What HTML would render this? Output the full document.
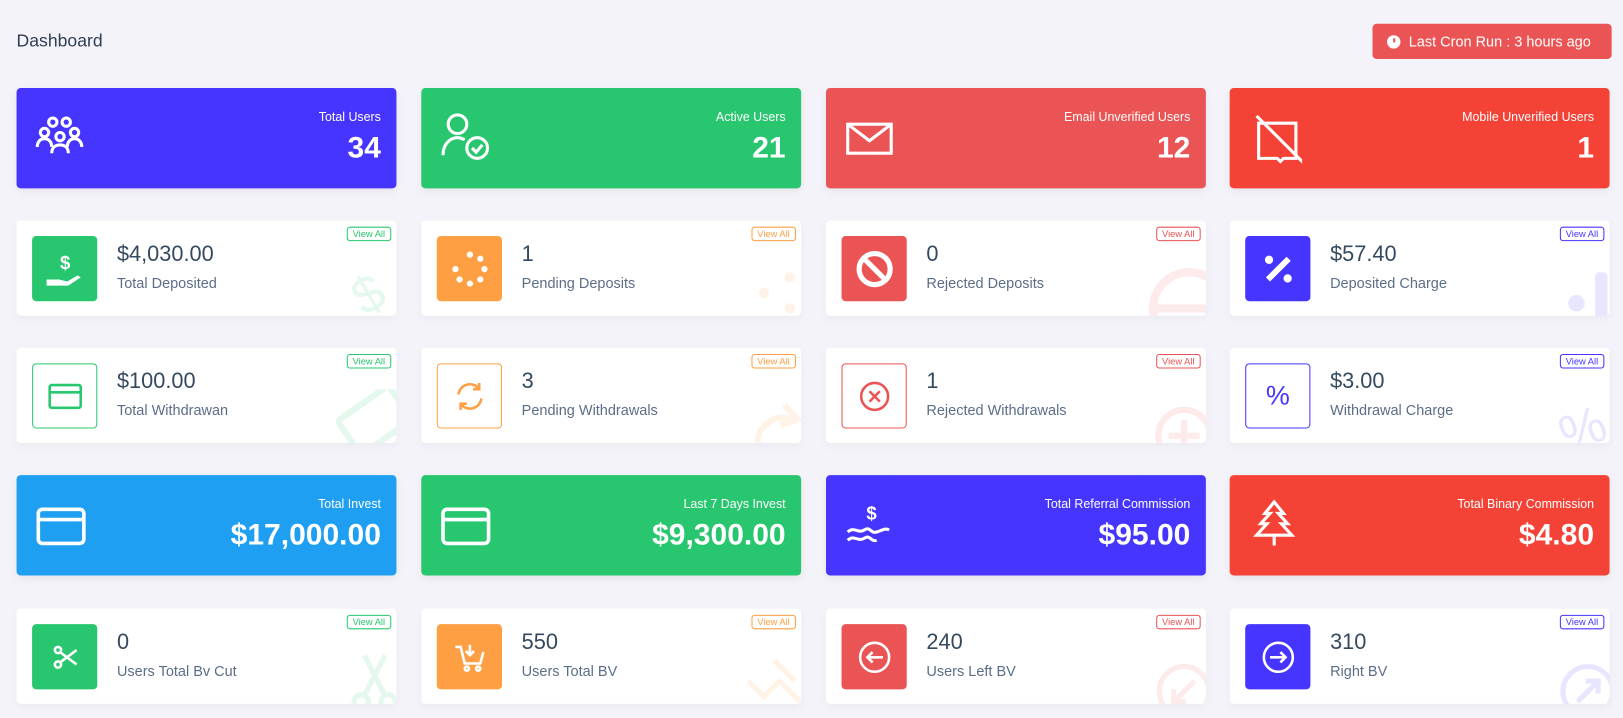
<!DOCTYPE html>
<html><head><meta charset="utf-8"><style>
*{box-sizing:border-box;margin:0;padding:0}
html,body{width:1623px;height:718px;background:#f3f3f9;overflow:hidden}
#w{position:absolute;left:0;top:0;width:1568px;height:694px;transform:scale(1.03508);transform-origin:0 0;font-family:"Liberation Sans",sans-serif;color:#34495e}
.title{position:absolute;left:16px;top:30px;font-size:17px;color:#2f3e53}
.cron{position:absolute;left:1326px;top:23px;width:231px;height:34px;background:#ea5455;border-radius:4px;color:#fff;font-size:14px;display:flex;align-items:center;padding-left:14px}
.cron .c{width:13px;height:13px;border-radius:50%;background:#fff;margin-right:8px;position:relative}
.cron .c:after{content:"";position:absolute;left:6px;top:3px;width:2px;height:4px;background:#ea5455}
.big{position:absolute;width:367px;height:97px;border-radius:4px;color:#fff;box-shadow:0 3px 8px rgba(0,0,0,.06)}
.big .lab{position:absolute;right:15px;top:21px;font-size:12px}
.big .val{position:absolute;right:15px;top:42px;font-size:29px;font-weight:bold}
.big svg{position:absolute;left:18px;top:23px}
.sm{position:absolute;width:367px;height:92px;background:#fff;border-radius:4px;overflow:hidden;box-shadow:0 3px 8px rgba(0,0,0,.04)}
.sm .ic{position:absolute;left:15px;top:15px;width:63px;height:63px;border-radius:4px;display:flex;align-items:center;justify-content:center}
.sm .v{position:absolute;left:97px;top:21px;font-size:21px;color:#34495e}
.sm .l{position:absolute;left:97px;top:52px;font-size:14px;color:#5b6e88}
.sm .va{position:absolute;right:5px;top:6px;font-size:9px;border:1px solid;border-radius:3px;padding:1px 5px}
.sm .bg{position:absolute;right:-4px;bottom:-8px;opacity:.12}
</style></head><body><div id="w">
<div class="title">Dashboard</div>
<div class="cron"><span class="c"></span>Last Cron Run : 3 hours ago</div>

<div class="big" style="left:16px;top:85px;background:#4634ff"><svg width="52" height="50" viewBox="0 0 52 50" fill="none" stroke="#fff" stroke-width="3"><circle cx="17" cy="10" r="4"/><circle cx="30" cy="10" r="4"/><circle cx="9" cy="20" r="4"/><circle cx="24" cy="24" r="4"/><circle cx="38" cy="20" r="4"/><path d="M2 34c0-5 3-8 7-8s7 3 7 8M16 40c0-5 3-8 8-8s8 3 8 8M31 34c0-5 3-8 7-8s7 3 7 8"/></svg><div class="lab">Total Users</div><div class="val">34</div></div>
<div class="big" style="left:407px;top:85px;background:#28c76f"><svg width="52" height="50" viewBox="0 0 52 50" fill="none" stroke="#fff" stroke-width="3"><circle cx="17" cy="12" r="9"/><path d="M3 42c0-10 6-17 14-17 3 0 5 1 7 2"/><circle cx="36" cy="35" r="10"/><path d="M31 35l4 4 6-7"/></svg><div class="lab">Active Users</div><div class="val">21</div></div>
<div class="big" style="left:798px;top:85px;background:#ea5455"><svg width="52" height="50" viewBox="0 0 52 50" fill="none" stroke="#fff" stroke-width="3"><rect x="3" y="12" width="42" height="28"/><path d="M3 12l21 16 21-16"/></svg><div class="lab">Email Unverified Users</div><div class="val">12</div></div>
<div class="big" style="left:1188px;top:85px;background:#f44336"><svg width="52" height="50" viewBox="0 0 52 50" fill="none" stroke="#fff" stroke-width="3"><path d="M10 11h36v34H34l-3 3-3-3H10z"/><path d="M8 4l46 46" /></svg><div class="lab">Mobile Unverified Users</div><div class="val">1</div></div>

<div class="sm" style="left:16px;top:213px"><div class="ic" style="background:#28c76f"><svg width="40" height="40" viewBox="0 0 40 40" fill="#fff"><text x="15" y="20" font-size="18" font-weight="bold" font-family="Liberation Sans">$</text><path d="M2 30h12l8 2 10-6 3 2-12 8H2z"/></svg></div><div class="v">$4,030.00</div><div class="l">Total Deposited</div><div class="va" style="color:#28c76f;border-color:#28c76f">View All</div><svg class="bg" width="50" height="60" viewBox="0 0 50 60"><text x="5" y="45" font-size="50" fill="#28c76f" transform="rotate(-30 25 30)">$</text></svg></div>
<div class="sm" style="left:407px;top:213px"><div class="ic" style="background:#ff9f43"><svg width="40" height="40" viewBox="0 0 40 40" fill="#fff"><circle cx="20" cy="6" r="3"/><circle cx="30" cy="10" r="3"/><circle cx="34" cy="20" r="3"/><circle cx="30" cy="30" r="3"/><circle cx="20" cy="34" r="3"/><circle cx="10" cy="30" r="3"/><circle cx="6" cy="20" r="3"/></svg></div><div class="v">1</div><div class="l">Pending Deposits</div><div class="va" style="color:#ff9f43;border-color:#ff9f43">View All</div><svg class="bg" width="60" height="60"><circle cx="45" cy="15" r="5" fill="#ff9f43"/><circle cx="20" cy="30" r="5" fill="#ff9f43"/><circle cx="45" cy="45" r="5" fill="#ff9f43"/></svg></div>
<div class="sm" style="left:798px;top:213px"><div class="ic" style="background:#ea5455"><svg width="40" height="40" viewBox="0 0 40 40" fill="none" stroke="#fff" stroke-width="5"><circle cx="20" cy="20" r="15"/><path d="M10 10l20 20"/></svg></div><div class="v">0</div><div class="l">Rejected Deposits</div><div class="va" style="color:#ea5455;border-color:#ea5455">View All</div><svg class="bg" width="70" height="60"><circle cx="50" cy="45" r="35" fill="none" stroke="#ea5455" stroke-width="8"/><path d="M15 45h70" stroke="#ea5455" stroke-width="8"/></svg></div>
<div class="sm" style="left:1188px;top:213px"><div class="ic" style="background:#4634ff"><svg width="40" height="40" viewBox="0 0 40 40" fill="#fff"><circle cx="11" cy="11" r="4"/><circle cx="29" cy="29" r="4"/><path d="M28 8l4 4-20 20-4-4z"/></svg></div><div class="v">$57.40</div><div class="l">Deposited Charge</div><div class="va" style="color:#4634ff;border-color:#4634ff">View All</div><svg class="bg" width="50" height="60"><circle cx="14" cy="40" r="8" fill="#4634ff"/><rect x="32" y="10" width="12" height="60" rx="4" fill="#4634ff"/></svg></div>

<div class="sm" style="left:16px;top:336px"><div class="ic" style="border:1px solid #28c76f"><svg width="34" height="26" fill="none" stroke="#28c76f" stroke-width="2.5"><rect x="2" y="2" width="30" height="22" rx="2"/><path d="M2 9h30"/></svg></div><div class="v">$100.00</div><div class="l">Total Withdrawan</div><div class="va" style="color:#28c76f;border-color:#28c76f">View All</div><svg class="bg" width="70" height="60"><rect x="15" y="10" width="60" height="40" rx="4" fill="none" stroke="#28c76f" stroke-width="6" transform="rotate(-35 45 30)"/></svg></div>
<div class="sm" style="left:407px;top:336px"><div class="ic" style="border:1px solid #ff9f43"><svg width="32" height="32" viewBox="0 0 32 32" fill="none" stroke="#ff9f43" stroke-width="2.5"><path d="M5 14a11 11 0 0 1 20-5M27 18a11 11 0 0 1-20 5M25 3v6h-6M7 29v-6h6"/></svg></div><div class="v">3</div><div class="l">Pending Withdrawals</div><div class="va" style="color:#ff9f43;border-color:#ff9f43">View All</div><svg class="bg" width="60" height="60" fill="none" stroke="#ff9f43" stroke-width="6"><path d="M15 60a25 25 0 0 1 35-30M40 15l12 14-16 6"/></svg></div>
<div class="sm" style="left:798px;top:336px"><div class="ic" style="border:1px solid #ea5455"><svg width="32" height="32" fill="none" stroke="#ea5455" stroke-width="2.5"><circle cx="16" cy="16" r="13"/><path d="M11 11l10 10M21 11l-10 10"/></svg></div><div class="v">1</div><div class="l">Rejected Withdrawals</div><div class="va" style="color:#ea5455;border-color:#ea5455">View All</div><svg class="bg" width="60" height="60" fill="none" stroke="#ea5455" stroke-width="6"><circle cx="35" cy="45" r="25"/><path d="M35 30v30M20 45h30"/></svg></div>
<div class="sm" style="left:1188px;top:336px"><div class="ic" style="border:1px solid #4634ff"><span style="color:#4634ff;font-size:26px">%</span></div><div class="v">$3.00</div><div class="l">Withdrawal Charge</div><div class="va" style="color:#4634ff;border-color:#4634ff">View All</div><svg class="bg" width="60" height="60"><text x="5" y="55" font-size="50" fill="#4634ff" transform="rotate(-20 30 30)">%</text></svg></div>

<div class="big" style="left:16px;top:459px;background:#1e9ff2"><svg width="52" height="50" fill="none" stroke="#fff" stroke-width="3.5"><rect x="3" y="10" width="44" height="33" rx="4"/><path d="M3 20h44"/></svg><div class="lab">Total Invest</div><div class="val">$17,000.00</div></div>
<div class="big" style="left:407px;top:459px;background:#28c76f"><svg width="52" height="50" fill="none" stroke="#fff" stroke-width="3.5"><rect x="3" y="10" width="44" height="33" rx="4"/><path d="M3 20h44"/></svg><div class="lab">Last 7 Days Invest</div><div class="val">$9,300.00</div></div>
<div class="big" style="left:798px;top:459px;background:#4634ff"><svg width="52" height="50" fill="none" stroke="#fff" stroke-width="3"><text x="21" y="20" font-size="18" font-weight="bold" fill="#fff" stroke="none" font-family="Liberation Sans">$</text><path d="M3 32c6-6 10 2 16-2s6 4 12 2 8-4 12-2M3 40c6-6 10 2 16-2s6 4 12 2"/></svg><div class="lab">Total Referral Commission</div><div class="val">$95.00</div></div>
<div class="big" style="left:1188px;top:459px;background:#f44336"><svg width="52" height="50" fill="none" stroke="#fff" stroke-width="3"><path d="M25 3l-9 11h5l-9 10h6L8 35h34l-10-11h6l-9-10h5zM25 35v10"/></svg><div class="lab">Total Binary Commission</div><div class="val">$4.80</div></div>

<div class="sm" style="left:16px;top:588px"><div class="ic" style="background:#28c76f"><svg width="30" height="30" fill="none" stroke="#fff" stroke-width="2.5"><circle cx="8" cy="8" r="3"/><circle cx="8" cy="22" r="3"/><path d="M10 10l16 12M10 20l16-12"/></svg></div><div class="v">0</div><div class="l">Users Total Bv Cut</div><div class="va" style="color:#28c76f;border-color:#28c76f">View All</div><svg class="bg" width="50" height="60" fill="none" stroke="#28c76f" stroke-width="5"><circle cx="12" cy="50" r="7"/><circle cx="38" cy="50" r="7"/><path d="M15 44L35 5M35 44L15 5"/></svg></div>
<div class="sm" style="left:407px;top:588px"><div class="ic" style="background:#ff9f43"><svg width="32" height="32" fill="none" stroke="#fff" stroke-width="2.5"><path d="M2 6h5l4 16h15l3-11M16 4v10M12 10l4 4 4-4"/><circle cx="13" cy="27" r="2"/><circle cx="24" cy="27" r="2"/></svg></div><div class="v">550</div><div class="l">Users Total BV</div><div class="va" style="color:#ff9f43;border-color:#ff9f43">View All</div><svg class="bg" width="60" height="60" fill="none" stroke="#ff9f43" stroke-width="5"><path d="M5 30l15 15 15-15 20 20M30 10l20 20"/></svg></div>
<div class="sm" style="left:798px;top:588px"><div class="ic" style="background:#ea5455"><svg width="34" height="34" fill="none" stroke="#fff" stroke-width="2.5"><circle cx="17" cy="17" r="14"/><path d="M25 17H10M15 12l-5 5 5 5"/></svg></div><div class="v">240</div><div class="l">Users Left BV</div><div class="va" style="color:#ea5455;border-color:#ea5455">View All</div><svg class="bg" width="60" height="60" fill="none" stroke="#ea5455" stroke-width="5"><circle cx="35" cy="40" r="24"/><path d="M45 30L25 50M25 38v12h12"/></svg></div>
<div class="sm" style="left:1188px;top:588px"><div class="ic" style="background:#4634ff"><svg width="34" height="34" fill="none" stroke="#fff" stroke-width="2.5"><circle cx="17" cy="17" r="14"/><path d="M9 17h15M19 12l5 5-5 5"/></svg></div><div class="v">310</div><div class="l">Right BV</div><div class="va" style="color:#4634ff;border-color:#4634ff">View All</div><svg class="bg" width="60" height="60" fill="none" stroke="#4634ff" stroke-width="5"><circle cx="35" cy="40" r="24"/><path d="M25 50L45 30M33 30h12v12"/></svg></div>
</div></body></html>
